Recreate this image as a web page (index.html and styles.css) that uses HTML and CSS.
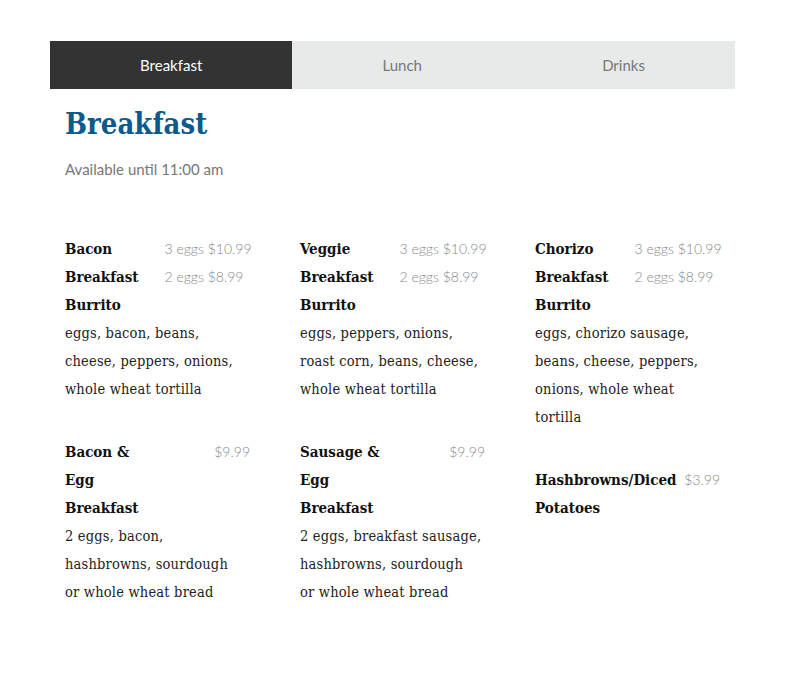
FILE: index.html
```html
<!DOCTYPE html>
<html>
<head>
<meta charset="utf-8">
<link rel="stylesheet" href="styles.css">
</head>
<body>
<div class="menu">
  <nav class="tabs">
    <div class="tab active">Breakfast</div>
    <div class="tab">Lunch</div>
    <div class="tab">Drinks</div>
  </nav>
  <section class="panel">
    <h1 class="title">Breakfast</h1>
    <p class="note">Available until 11:00 am</p>
    <div class="grid">
      <div class="col">
        <div class="item">
          <div class="head">
            <div class="name">Bacon Breakfast Burrito</div>
            <div class="price">3 eggs $10.99<br>2 eggs $8.99</div>
          </div>
          <div class="desc">eggs, bacon, beans, cheese, peppers, onions, whole wheat tortilla</div>
        </div>
        <div class="item">
          <div class="head">
            <div class="name">Bacon &amp; Egg Breakfast</div>
            <div class="price">$9.99</div>
          </div>
          <div class="desc">2 eggs, bacon, hashbrowns, sourdough<br>or whole wheat bread</div>
        </div>
      </div>
      <div class="col">
        <div class="item">
          <div class="head">
            <div class="name">Veggie Breakfast Burrito</div>
            <div class="price">3 eggs $10.99<br>2 eggs $8.99</div>
          </div>
          <div class="desc">eggs, peppers, onions, roast corn, beans, cheese, whole wheat tortilla</div>
        </div>
        <div class="item">
          <div class="head">
            <div class="name">Sausage &amp; Egg Breakfast</div>
            <div class="price">$9.99</div>
          </div>
          <div class="desc">2 eggs, breakfast sausage, hashbrowns, sourdough<br>or whole wheat bread</div>
        </div>
      </div>
      <div class="col">
        <div class="item">
          <div class="head">
            <div class="name">Chorizo Breakfast Burrito</div>
            <div class="price">3 eggs $10.99<br>2 eggs $8.99</div>
          </div>
          <div class="desc">eggs, chorizo sausage, beans, cheese, peppers, onions, whole wheat tortilla</div>
        </div>
        <div class="item">
          <div class="head">
            <div class="name">Hashbrowns/Diced Potatoes</div>
            <div class="price">$3.99</div>
          </div>
        </div>
      </div>
    </div>
  </section>
</div>
</body>
</html>
```
FILE: styles.css
```css
html, body {
  margin: 0;
  padding: 0;
  background: #fff;
}
.menu {
  margin: 41px 50px 0 50px;
}
.tabs {
  display: flex;
  height: 48px;
  background: #e8eaea;
}
.tab {
  flex: 1 1 auto;
  display: flex;
  align-items: center;
  justify-content: center;
  font-family: "Lato", sans-serif;
  font-size: 15px;
  color: #777;
}
.tab.active {
  background: #333;
  color: #fff;
}
.panel {
  padding: 0 15px;
}
.title {
  margin: 18px 0 0 0;
  font-family: "DejaVu Serif Condensed", "DejaVu Serif", serif;
  font-weight: bold;
  font-size: 29px;
  line-height: 34px;
  color: #0c5a8c;
}
.note {
  margin: 18px 0 0 0;
  font-family: "Lato", sans-serif;
  font-size: 15px;
  line-height: 20px;
  color: #777;
}
.grid {
  display: flex;
  gap: 50px;
  margin-top: 56px;
}
.col {
  width: 185px;
  display: flex;
  flex-direction: column;
  gap: 35px;
}
.head {
  display: flex;
  gap: 7px;
}
.name {
  flex: 0 0 50%;
  font-family: "DejaVu Serif Condensed", "DejaVu Serif", serif;
  font-weight: bold;
  font-size: 15px;
  line-height: 28px;
  color: #111;
}
.price {
  margin-left: auto;
  font-family: "Lato", sans-serif;
  font-weight: 300;
  font-size: 14px;
  line-height: 28px;
  color: #888;
  white-space: nowrap;
}
.desc {
  font-family: "DejaVu Serif Condensed", "DejaVu Serif", serif;
  font-size: 14.5px;
  letter-spacing: 0.2px;
  line-height: 28px;
  color: #222;
}
```
